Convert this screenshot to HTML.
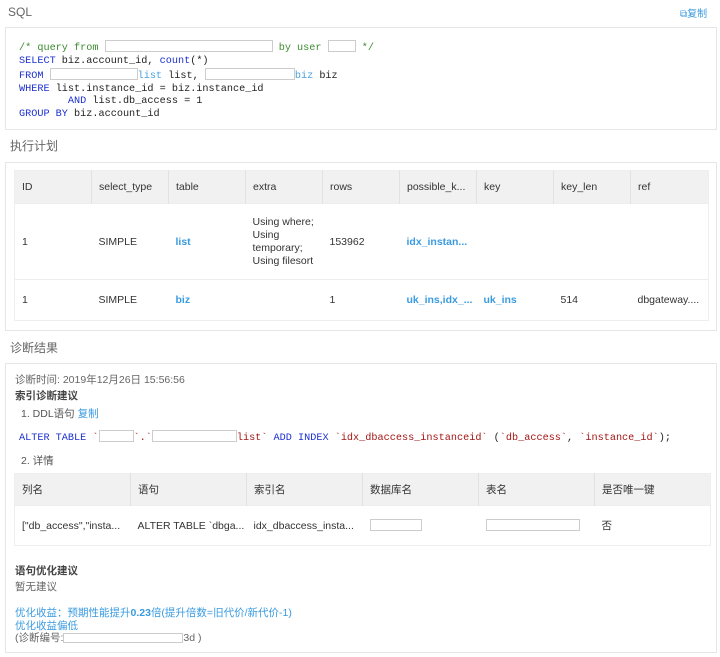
<!DOCTYPE html>
<html><head><meta charset="utf-8"><style>
*{margin:0;padding:0;box-sizing:border-box}
body{width:720px;height:657px;background:#fff;font-family:"Liberation Sans","Noto Sans CJK SC",sans-serif;font-size:11px;color:#333;position:relative;overflow:hidden}
.a{position:absolute}
.title{color:#666;font-size:12px}
.box{position:absolute;left:5px;width:712px;border:1px solid #e6e6e6}
.code{font-family:"Liberation Mono",monospace;font-size:10.2px;line-height:12.5px;white-space:pre;color:#222}
.cm{color:#3d8b2f}.kw{color:#1a2fcf}.st{color:#a31515}.bl{color:#4aa3df}
.blank{display:inline-block;border:1px solid #ccc;height:12px;vertical-align:-2px;background:#fff}
table{border-collapse:collapse;position:absolute;left:8px;table-layout:fixed;font-size:10.5px}
th{background:#f1f1f1;font-weight:normal;text-align:left;padding-left:7px;border-left:1px solid #e2e2e2;color:#333}
th:first-child{border-left:none}
td{padding-left:7px;border-top:1px solid #eee;white-space:nowrap;overflow:hidden}
.t1{border:1px solid #eee}
.lk{color:#3a9be0;font-weight:bold}
.blue{color:#3a9be0}
</style></head><body>
<div class="a title" style="left:8px;top:5px;font-size:12px">SQL</div>
<div class="a blue" style="left:680px;top:5px;font-size:10px">⧉复制</div>
<div class="box" style="top:27px;height:103px">
<div class="code a" style="left:13px;top:12px"><span class="cm">/* query from <span class="blank" style="width:168px"></span> by user <span class="blank" style="width:28px"></span> */</span>
<span class="kw">SELECT</span> biz.account_id, <span class="kw">count</span>(*)
<span class="kw">FROM</span> <span class="blank" style="width:88px"></span><span class="bl">list</span> list, <span class="blank" style="width:90px"></span><span class="bl">biz</span> biz
<span class="kw">WHERE</span> list.instance_id = biz.instance_id
        <span class="kw">AND</span> list.db_access = 1
<span class="kw">GROUP BY</span> biz.account_id</div>
</div>
<div class="a title" style="left:10px;top:137px">执行计划</div>
<div class="box" style="top:162px;height:169px">
<table class="t1" style="top:7px;width:694px">
<colgroup><col style="width:77px"><col style="width:77px"><col style="width:77px"><col style="width:77px"><col style="width:77px"><col style="width:77px"><col style="width:77px"><col style="width:77px"><col style="width:78px"></colgroup>
<tr style="height:33px"><th>ID</th><th>select_type</th><th>table</th><th>extra</th><th>rows</th><th>possible_k...</th><th>key</th><th>key_len</th><th>ref</th></tr>
<tr style="height:76px"><td>1</td><td>SIMPLE</td><td class="lk">list</td><td style="white-space:normal;line-height:13px">Using where;<br>Using<br>temporary;<br>Using filesort</td><td>153962</td><td class="lk">idx_instan...</td><td></td><td></td><td></td></tr>
<tr style="height:41px"><td>1</td><td>SIMPLE</td><td class="lk">biz</td><td></td><td>1</td><td class="lk">uk_ins,idx_...</td><td class="lk">uk_ins</td><td>514</td><td>dbgateway....</td></tr>
</table>
</div>
<div class="a title" style="left:10px;top:339px">诊断结果</div>
<div class="box" style="top:363px;height:290px">
<div class="a" style="left:9px;top:8px;color:#666;font-size:10.5px">诊断时间: 2019年12月26日 15:56:56</div>
<div class="a" style="left:9px;top:24px;font-weight:bold;font-size:10.5px;color:#444">索引诊断建议</div>
<div class="a" style="left:15px;top:42px;color:#555;font-size:10.5px">1. DDL语句 <span class="blue">复制</span></div>
<div class="a code" style="left:13px;top:66px"><span class="kw">ALTER TABLE</span> <span class="st">`<span class="blank" style="width:35px"></span>`.`<span class="blank" style="width:85px"></span>list`</span> <span class="kw">ADD INDEX</span> <span class="st">`idx_dbaccess_instanceid`</span> (<span class="st">`db_access`</span>, <span class="st">`instance_id`</span>);</div>
<div class="a" style="left:15px;top:89px;color:#555;font-size:10.5px">2. 详情</div>
<table class="t1" style="top:109px;left:8px;width:696px">
<colgroup><col style="width:116px"><col style="width:116px"><col style="width:116px"><col style="width:116px"><col style="width:116px"><col style="width:116px"></colgroup>
<tr style="height:32px"><th>列名</th><th>语句</th><th>索引名</th><th>数据库名</th><th>表名</th><th>是否唯一键</th></tr>
<tr style="height:40px"><td>["db_access","insta...</td><td>ALTER TABLE `dbga...</td><td>idx_dbaccess_insta...</td><td><span class="blank" style="width:52px"></span></td><td><span class="blank" style="width:94px"></span></td><td>否</td></tr>
</table>
<div class="a" style="left:9px;top:199px;font-weight:bold;font-size:10.5px;color:#444">语句优化建议</div>
<div class="a" style="left:9px;top:215px;color:#666;font-size:10.5px">暂无建议</div>
<div class="a blue" style="left:9px;top:241px;font-size:10.5px">优化收益：预期性能提升<b>0.23</b>倍(提升倍数=旧代价/新代价-1)</div>
<div class="a blue" style="left:9px;top:254px;font-size:10.5px">优化收益偏低</div>
<div class="a" style="left:9px;top:266px;color:#666;font-size:10.5px">(诊断编号:<span class="blank" style="width:120px;height:10px"></span>3d )</div>
</div>
</body></html>
